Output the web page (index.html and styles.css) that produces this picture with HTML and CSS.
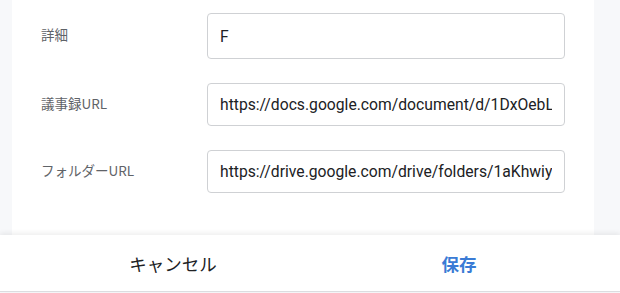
FILE: index.html
```html
<!DOCTYPE html>
<html lang="ja">
<head>
<meta charset="utf-8">
<link rel="stylesheet" href="styles.css">
</head>
<body>
<div class="page">
  <div class="card">
    <div class="row">
      <label class="label">詳細</label>
      <input class="field field-tall" type="text" value="F">
    </div>
    <div class="row">
      <label class="label">議事録URL</label>
      <input class="field" type="text" value="https://docs.google.com/document/d/1DxOebLq8sTzR">
    </div>
    <div class="row">
      <label class="label">フォルダーURL</label>
      <input class="field" type="text" value="https://drive.google.com/drive/folders/1aKhwiy3nP">
    </div>
  </div>
</div>
<div class="footer">
  <button class="btn btn-cancel">キャンセル</button>
  <button class="btn btn-save">保存</button>
</div>
</body>
</html>
```

FILE: styles.css
```css
html, body {
  margin: 0;
  padding: 0;
}
body {
  background: #f7f8fa;
  font-family: Roboto, "Noto Sans CJK JP", sans-serif;
  width: 620px;
  height: 293px;
  overflow: hidden;
}
.page {
  height: 235px;
  padding: 0 26px 0 12px;
  box-sizing: border-box;
}
.card {
  background: #ffffff;
  height: 235px;
  box-sizing: border-box;
  padding: 13px 29px 0 29px;
  display: flex;
  flex-direction: column;
  gap: 24px;
}
.row {
  display: flex;
  align-items: center;
}
.label {
  width: 166px;
  flex: none;
  font-size: 13.5px;
  line-height: 1;
  padding-bottom: 2px;
  color: #5f6368;
  font-family: "Noto Sans CJK JP", sans-serif;
}
.field {
  width: 358px;
  height: 43px;
  box-sizing: border-box;
  border: 1px solid #cfd1d4;
  border-radius: 4px;
  padding: 0 12px;
  font-family: Roboto, "Noto Sans CJK JP", sans-serif;
  font-size: 15.7px;
  color: #202124;
  background: #fff;
  outline: none;
}
.field-tall {
  height: 46px;
}
.footer {
  position: relative;
  height: 56px;
  background: #fff;
  box-shadow: 0 -2px 5px rgba(0, 0, 0, 0.07);
  border-bottom: 1px solid #dcdde0;
  display: grid;
  grid-template-columns: 286px 286px;
  padding-left: 30px;
}
.btn {
  border: none;
  background: none;
  font-family: "Noto Sans CJK JP", sans-serif;
  font-size: 17.5px;
  padding: 0;
  cursor: pointer;
}
.btn-cancel {
  color: #202124;
}
.btn-save {
  color: #3a7bd5;
  font-weight: 700;
}
```
